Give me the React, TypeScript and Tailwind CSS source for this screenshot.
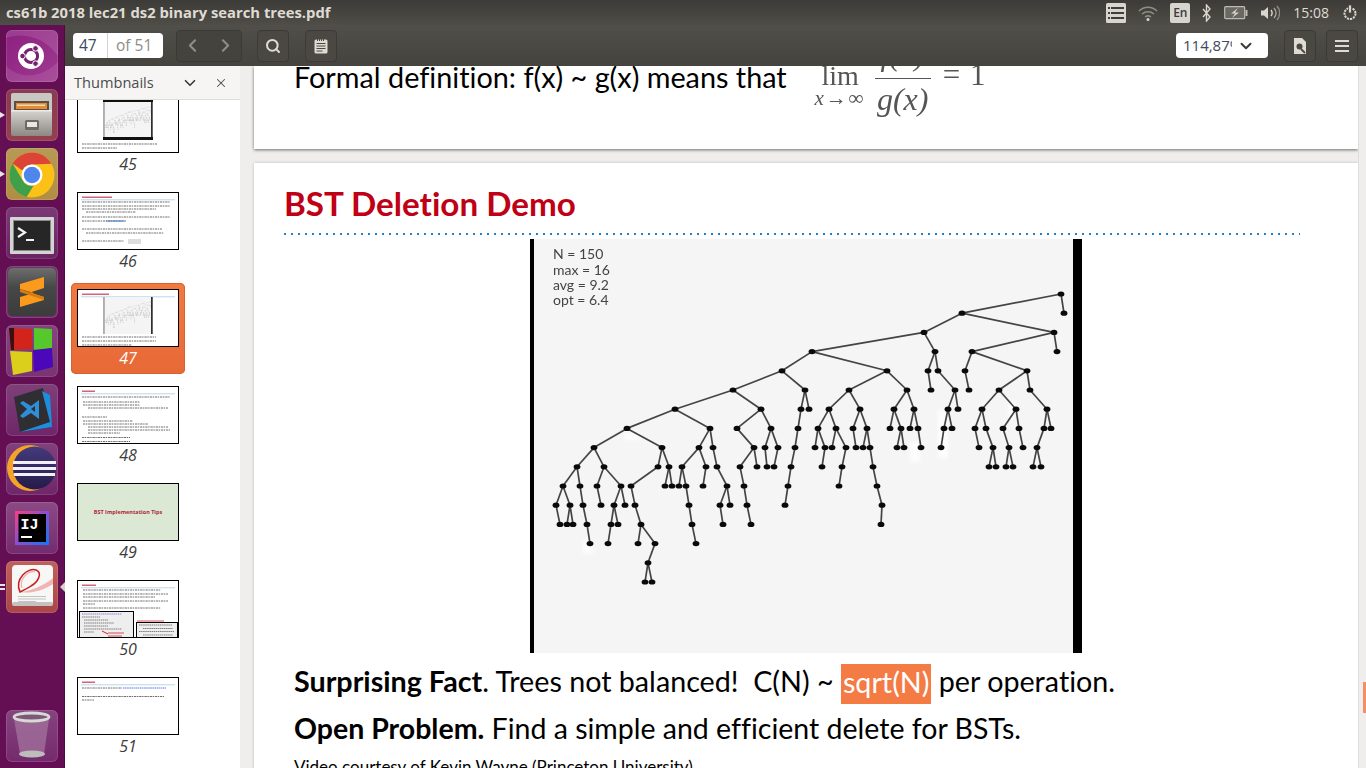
import { ChevronDown, ChevronLeft, ChevronRight, Search, X } from 'lucide-react';
import type { ReactNode } from 'react';

type TreeNode = [number, ...TreeNode[]];

// x of every node, read off the picture; y follows from the depth
const TREE: TreeNode = [1061,
  [1064],
  [962,
    [1054,
      [1057],
      [972,
        [965, [969]],
        [1027,
          [999,
            [982, [975, [979]], [986, [993, [989], [996]]]],
            [1016, [1003, [1009, [1006], [1013]]], [1019, [1023]]],
          ],
          [1030, [1047, [1044, [1037, [1033], [1041]]], [1051]]],
        ],
      ],
    ],
    [924,
      [935,
        [928, [931]],
        [938, [955, [948, [944, [941]], [952]], [958]]],
      ],
      [812,
        [782,
          [733,
            [675,
              [627,
                [594,
                  [577, [563, [556, [560]], [570, [567], [573]]], [580, [583, [587, [590]]]]],
                  [604, [597, [601]], [621, [614, [611, [608]], [618]], [625]]],
                ],
                [662,
                  [658, [631, [635, [641, [638], [655, [648, [645], [652]]]]]]],
                  [669, [665], [672]],
                ],
              ],
              [710,
                [699, [682, [679], [686, [689, [692, [696]]]]], [706, [703]]],
                [713, [717, [727, [720, [723]], [730]]]],
              ],
            ],
            [761,
              [737, [754, [740, [744, [747, [751]]]], [757]]],
              [771, [765, [767]], [778, [774]]],
            ],
          ],
          [805,
            [801, [798, [795, [791, [788, [785]]]]]],
            [809],
          ],
        ],
        [887,
          [849,
            [829,
              [818, [815], [825, [822]]],
              [836, [832], [846, [842, [839]]]],
            ],
            [860,
              [853, [856]],
              [867, [863], [870, [873, [877, [882, [881]]]]]],
            ],
          ],
          [907,
            [894, [890], [901, [897], [904]]],
            [914, [910], [918, [921]]],
          ],
        ],
      ],
    ],
  ],
];

const rowY = (depth: number) => 294 + depth * 19.2;

function TreeShape({ node, depth = 0 }: { node: TreeNode; depth?: number }) {
  const [x, ...kids] = node;
  return (
    <>
      {kids.map((kid, i) => (
        <g key={i}>
          <line x1={x} y1={rowY(depth)} x2={kid[0]} y2={rowY(depth + 1)} stroke="#444" strokeWidth="1.7" />
          <TreeShape node={kid} depth={depth + 1} />
        </g>
      ))}
      <ellipse cx={x} cy={rowY(depth)} rx="3.4" ry="2.6" fill="#0a0a0a" />
    </>
  );
}

function TreePicture() {
  return (
    <svg viewBox="530 239 552 414" className="block h-[414px] w-[552px]">
      <rect x="530" y="239" width="552" height="414" fill="#f5f5f5" />
      <g fill="#fdfdfd" className="blur-[2px]">
        <rect x="938" y="410" width="10" height="48" />
        <rect x="910" y="442" width="10" height="20" />
        <rect x="583" y="540" width="10" height="14" />
        <rect x="624" y="433" width="16" height="7" />
        <rect x="1008" y="402" width="7" height="16" />
      </g>
      <g className="blur-[0.45px]">
        <TreeShape node={TREE} />
      </g>
      <rect x="530" y="239" width="4" height="414" fill="#000" />
      <rect x="1073" y="239" width="9" height="414" fill="#000" />
      <g fontFamily="Lato, sans-serif" fontSize="14" fill="#444" className="blur-[0.3px]">
        <text x="553" y="259">N = 150</text>
        <text x="553" y="275">max = 16</text>
        <text x="553" y="290">avg = 9.2</text>
        <text x="553" y="305">opt = 6.4</text>
      </g>
    </svg>
  );
}

function Tile({ className, children }: { className: string; children: ReactNode }) {
  return (
    <div className={`relative h-[52px] w-[52px] shrink-0 overflow-hidden rounded-[6px] shadow-[inset_0_0_0_1px_rgba(255,255,255,0.12)] ${className}`}>
      {children}
    </div>
  );
}

function UbuntuIcon() {
  return (
    <svg viewBox="0 0 52 52" className="h-full w-full">
      <path d="M0 8C16 2 38 6 52 26V0H0z" fill="#fff" opacity="0.12" />
      <path d="M0 36c14 14 36 12 52-4v20H0z" fill="#fff" opacity="0.1" />
      <circle cx="25" cy="26" r="13" fill="#fff" />
      <circle cx="25" cy="26" r="6.6" fill="none" stroke="#77216f" strokeWidth="3" />
      <g fill="#77216f" stroke="#fff" strokeWidth="1">
        <circle cx="16.5" cy="26" r="2.8" />
        <circle cx="29.5" cy="18.4" r="2.8" />
        <circle cx="29.5" cy="33.6" r="2.8" />
      </g>
    </svg>
  );
}

function FilesIcon() {
  return (
    <svg viewBox="0 0 52 52" className="h-full w-full">
      <defs>
        <linearGradient id="cabinet" x1="0" y1="0" x2="0" y2="1">
          <stop offset="0" stopColor="#d6d4d0" />
          <stop offset="1" stopColor="#8c8984" />
        </linearGradient>
      </defs>
      <rect x="5" y="4" width="41" height="20" rx="2" fill="#c9c7c3" />
      <rect x="8" y="12" width="35" height="10" fill="#5b5147" />
      <rect x="10" y="14" width="31" height="6" fill="#e58b38" />
      <rect x="11" y="15.500" width="28" height="1.500" fill="#f8d9a8" />
      <rect x="5" y="21" width="41" height="26" rx="2" fill="url(#cabinet)" />
      <rect x="5" y="21" width="41" height="1.500" fill="#eceae7" />
      <rect x="19" y="31" width="14" height="10" rx="1.500" fill="#6d6a65" />
      <rect x="21" y="33" width="10" height="5" fill="#e9e7e4" />
    </svg>
  );
}

function ChromeIcon() {
  return (
    <svg viewBox="0 0 52 52" className="h-full w-full">
      <circle cx="26" cy="27" r="22.500" fill="#fbc116" />
      <path d="M6.600 15.600A22.500 22.500 0 0 1 45.500 15.800L26 16.500a10.500 10.500 0 0 0-9.600 6z" fill="#dc4437" />
      <path d="M6.600 15.600 16.700 32.500a10.500 10.500 0 0 0 10.900 5L20.700 49A22.500 22.500 0 0 1 6.600 15.600z" fill="#3f9f4b" />
      <circle cx="26" cy="27" r="10.500" fill="#fff" />
      <circle cx="26" cy="27" r="8.200" fill="#4f86ec" />
    </svg>
  );
}

function TerminalIcon() {
  return (
    <svg viewBox="0 0 52 52" className="h-full w-full">
      <rect x="4" y="10" width="44" height="37" rx="1" fill="#d4d4d2" />
      <rect x="7" y="13" width="38" height="31" fill="#8a8a88" />
      <rect x="8" y="14" width="36" height="29" fill="#262626" />
      <path d="M12 21l7 4.500-7 4.500" fill="none" stroke="#f2f2f2" strokeWidth="2.200" />
      <rect x="20" y="32" width="8" height="2" fill="#f2f2f2" />
    </svg>
  );
}

function SublimeIcon() {
  return (
    <svg viewBox="0 0 52 52" className="h-full w-full">
      <defs>
        <linearGradient id="subl" x1="0" y1="0" x2="0" y2="1">
          <stop offset="0" stopColor="#6e6e6e" />
          <stop offset="0.4" stopColor="#474747" />
          <stop offset="1" stopColor="#3c3c3c" />
        </linearGradient>
      </defs>
      <rect x="2" y="2" width="48" height="48" rx="5" fill="url(#subl)" />
      <path d="M14 18 38 11V22L24 26.500 38 31V34L14 41V31L28 27 14 23z" fill="#fb9a1d" />
      <path d="M14 23 38 31V34L14 26z" fill="#d97c0c" />
    </svg>
  );
}

function CubeIcon() {
  return (
    <svg viewBox="0 0 52 52" className="h-full w-full">
      <path d="M3 3l23 1v20L5 25z" fill="#d3241c" />
      <path d="M3 3l5 0 0 22-3 0z" fill="#3a1010" />
      <path d="M28 3l18 1v19l-18 3z" fill="#55c82c" />
      <path d="M4 26l22 1v19L7 50z" fill="#dccf1c" />
      <path d="M27 25l19-2 1 19-19 5z" fill="#4a08b8" />
    </svg>
  );
}

function VsCodeIcon() {
  return (
    <svg viewBox="0 0 52 52" className="h-full w-full">
      <path d="M8 13 37 4l9 39-32 5z" fill="#2f2f33" />
      <path d="M36 7l8 4 2 32-32 5 30-10z" fill="#1b8fdc" />
      <path d="M33 16v19l-8-6-8 5-3-2 7-7-7-6 3-2 8 5zM29 22l-4 3 4 3z" fill="#2e8fd8" fillRule="evenodd" />
    </svg>
  );
}

function EclipseIcon() {
  return (
    <svg viewBox="0 0 52 52" className="h-full w-full">
      <defs>
        <linearGradient id="ecl" x1="0" y1="0" x2="0" y2="1">
          <stop offset="0" stopColor="#453a7c" />
          <stop offset="1" stopColor="#241b4a" />
        </linearGradient>
      </defs>
      <circle cx="24" cy="25" r="23" fill="#f5a228" />
      <circle cx="28.500" cy="25" r="21.500" fill="url(#ecl)" />
      <g fill="#f2f0f6">
        <rect x="7" y="18" width="43" height="3" />
        <rect x="7" y="24" width="43" height="3" />
        <rect x="8" y="30" width="41" height="3" />
      </g>
    </svg>
  );
}

function IdeaIcon() {
  return (
    <svg viewBox="0 0 52 52" className="h-full w-full">
      <defs>
        <linearGradient id="ijg" x1="0" y1="0" x2="1" y2="1">
          <stop offset="0" stopColor="#fc3f81" />
          <stop offset="0.5" stopColor="#8a4fd0" />
          <stop offset="1" stopColor="#087cfa" />
        </linearGradient>
      </defs>
      <rect x="9" y="9" width="34" height="34" fill="url(#ijg)" />
      <rect x="12.500" y="12" width="27.500" height="28" fill="#000" />
      <text x="14.500" y="27" fontFamily="'Liberation Mono', monospace" fontWeight="700" fontSize="15" fill="#fff">IJ</text>
      <rect x="15" y="34" width="11" height="2" fill="#fff" />
    </svg>
  );
}

function EvinceIcon() {
  return (
    <svg viewBox="0 0 52 52" className="h-full w-full">
      <rect x="6" y="4" width="41" height="41" rx="4" fill="#f7f7f5" />
      <rect x="6" y="41" width="41" height="4" rx="2" fill="#c2c2bf" />
      <path d="M14 31C24 30 36 26 47 17v6C36 30 24 33 14 31z" fill="#f2b4b2" />
      <path d="M14 31C8 18 22 6 30 9c7 3 2 12-5 16-3 2-7 4-11 6z" fill="none" stroke="#c81e22" strokeWidth="1.500" />
      <path d="M16 27C13 17 23 9 29 11" fill="none" stroke="#f0b0ae" strokeWidth="1.200" />
      <g fill="#c3c3c1">
        <rect x="12" y="35" width="28" height="1" />
        <rect x="12" y="37.500" width="28" height="1" />
        <rect x="12" y="40" width="18" height="1" />
      </g>
    </svg>
  );
}

function TrashIcon() {
  return (
    <svg viewBox="0 0 52 52" className="h-full w-full">
      <path d="M8 9h35l-5 35c-3 3-21 3-24 0z" fill="#a5789f" opacity="0.7" />
      <ellipse cx="25.500" cy="7" rx="17.500" ry="4" fill="#7b5a78" stroke="#d8d8d6" strokeWidth="2.800" />
      <ellipse cx="26" cy="44" rx="13" ry="3.500" fill="#bdbdbb" />
    </svg>
  );
}

function TrayIcons() {
  return (
    <div className="flex h-full items-center">
      <svg viewBox="0 0 20 20" className="h-[20px] w-[20px]">
        <rect width="20" height="20" rx="1.500" fill="#d8d5cf" />
        <g fill="#3f3e3a">
          <rect x="2" y="4" width="2" height="2" />
          <rect x="5" y="4" width="13" height="2" />
          <rect x="2" y="9" width="2" height="2" />
          <rect x="5" y="9" width="13" height="2" />
          <rect x="2" y="14" width="2" height="2" />
          <rect x="5" y="14" width="13" height="2" />
        </g>
      </svg>
      <svg viewBox="0 0 20 16" className="ml-[12px] h-[16px] w-[20px]" fill="none" stroke="#8f8d87" strokeWidth="1.500">
        <path d="M1 6c5-5 13-5 18 0" />
        <path d="M4 9c3.500-3 8.500-3 12 0" />
        <path d="M7 12c2-1.500 4-1.500 6 0" />
        <circle cx="10" cy="14.500" r="0.800" fill="#d8d5cf" stroke="#d8d5cf" />
      </svg>
      <div className="ml-[12px] flex h-[20px] w-[20px] items-center justify-center rounded-[2px] bg-[#d8d5cf] font-['Open_Sans',sans-serif] text-[12px] font-semibold text-[#3c3b37]">
        En
      </div>
      <svg viewBox="0 0 10 18" className="ml-[12px] h-[18px] w-[10px]" fill="none" stroke="#d8d5cf" strokeWidth="1.400">
        <path d="M1 5l7 8-3.500 4V1L8 5 1 13" />
      </svg>
      <svg viewBox="0 0 24 14" className="ml-[12px] h-[14px] w-[24px]">
        <rect x="0.700" y="0.700" width="20" height="12" rx="1" fill="#6a6862" stroke="#bdbab3" strokeWidth="1.200" />
        <rect x="21.500" y="4" width="2" height="6" fill="#bdbab3" />
        <path d="M14 2 7 7.500h4L8 12l7-5.500h-4z" fill="#d8d5cf" />
      </svg>
      <svg viewBox="0 0 20 16" className="ml-[12px] h-[16px] w-[20px]" fill="none">
        <path d="M1 5.500h3L8 2v12L4 10.500H1z" fill="#d8d5cf" />
        <path d="M11 5c1.500 2 1.500 4 0 6" stroke="#d8d5cf" strokeWidth="1.400" />
        <path d="M14 3c2.500 3 2.500 7 0 10" stroke="#a9a6a0" strokeWidth="1.300" />
        <path d="M17 1c3.500 4 3.500 10 0 14" stroke="#8f8d87" strokeWidth="1.300" />
      </svg>
      <span className="ml-[13px] font-['Open_Sans',sans-serif] text-[14px] text-[#dfdbd2]">15:08</span>
      <svg viewBox="0 0 16 16" className="ml-[13px] h-[16px] w-[16px]" fill="none" stroke="#d8d5cf">
        <circle cx="8" cy="8.500" r="5.500" strokeWidth="2" strokeDasharray="2.200 0.900" />
        <rect x="6.500" y="0" width="3" height="8" fill="#d8d5cf" stroke="#46443f" strokeWidth="0.800" />
      </svg>
    </div>
  );
}

function ToolButton({ children }: { children: ReactNode }) {
  return (
    <div className="flex h-[32px] w-[32px] shrink-0 items-center justify-center rounded-[4px] border border-[#3b3a36] bg-[#4a4842] text-[#dfdbd2]">
      {children}
    </div>
  );
}

function Toolbar() {
  return (
    <div className="flex h-[41px] shrink-0 items-center bg-gradient-to-b from-[#514f49] to-[#45433d] pr-[8px] pl-[8px] font-['Open_Sans',sans-serif]">
      <div className="flex h-[25px] w-[90px] items-center rounded-[4px] bg-white text-[15.5px]">
        <span className="w-[35px] border-r border-[#d5d3cf] pl-[6px] leading-[25px] text-[#3b4a5e]">47</span>
        <span className="pl-[8px] text-[#8f8c86]">of 51</span>
      </div>
      <div className="ml-[13px] flex h-[32px] w-[66px] items-center gap-[12px] rounded-[4px] border border-[#3b3a36] bg-[#45433d] pl-[5px] text-[#8f8d87]">
        <ChevronLeft size={21} strokeWidth={2.4} />
        <ChevronRight size={21} strokeWidth={2.4} />
      </div>
      <div className="ml-[15px]">
        <ToolButton>
          <Search size={16} strokeWidth={3} />
        </ToolButton>
      </div>
      <div className="ml-[16px]">
        <ToolButton>
          <svg viewBox="0 0 14 16" className="h-[16px] w-[14px]">
            <rect x="0.500" y="1.500" width="13" height="14" rx="1.500" fill="#dfdbd2" />
            <g fill="#4a4842">
              <rect x="3" y="0" width="1" height="3" />
              <rect x="5" y="0" width="1" height="3" />
              <rect x="7" y="0" width="1" height="3" />
              <rect x="9" y="0" width="1" height="3" />
              <rect x="2.500" y="5" width="9" height="1" />
              <rect x="2.500" y="7.500" width="9" height="1" />
              <rect x="2.500" y="10" width="9" height="1" />
              <rect x="2.500" y="12.500" width="6" height="1" />
            </g>
          </svg>
        </ToolButton>
      </div>
      <div className="flex-1" />
      <div className="flex h-[25px] w-[92px] items-center rounded-[4px] bg-white pl-[7px] text-[15px] text-[#3b4a5e]">
        <span className="w-[49px] overflow-hidden whitespace-nowrap">114,87%</span>
        <ChevronDown size={18} strokeWidth={2.6} className="ml-[5px] text-[#3c3b37]" />
      </div>
      <div className="ml-[16px]">
        <ToolButton>
          <svg viewBox="0 0 14 16" className="h-[16px] w-[14px]">
            <path d="M1 0h8l4 4v12H1z" fill="#dfdbd2" />
            <circle cx="6.500" cy="8.500" r="3" fill="#4a4842" />
            <path d="M8 11l4 4" stroke="#4a4842" strokeWidth="1.800" />
          </svg>
        </ToolButton>
      </div>
      <div className="ml-[10px]">
        <ToolButton>
          <svg viewBox="0 0 14 12" className="h-[12px] w-[14px]" fill="#dfdbd2">
            <rect y="0" width="14" height="2" />
            <rect y="5" width="14" height="2" />
            <rect y="10" width="14" height="2" />
          </svg>
        </ToolButton>
      </div>
    </div>
  );
}

type Line = [number, number, number];

function MiniPage({ title, lines = [], children }: { title?: number; lines?: Line[]; children?: ReactNode }) {
  return (
    <svg viewBox="0 0 100 56" className="block h-[56px] w-[100px]">
      {title && <rect x="4" y="3.500" width={title} height="1.500" fill="#c8203a" opacity="0.7" className="blur-[0.3px]" />}
      {title && <line x1="3" y1="6.800" x2="97" y2="6.800" stroke="#9cc4e4" strokeWidth="0.700" />}
      <g className="blur-[0.35px]">
        {lines.map(([x, y, w], i) => (
          <line key={i} x1={x} y1={y} x2={x + w} y2={y} stroke="#222" strokeWidth="1" strokeDasharray="2.400 0.600 1.400 0.800" opacity="0.65" />
        ))}
      </g>
      {children}
    </svg>
  );
}

function SmallTree({ x, y }: { x: number; y: number }) {
  return (
    <svg x={x} y={y} width="50" height="37" viewBox="530 239 552 414">
      <rect x="530" y="239" width="552" height="414" fill="#f4f4f4" />
      <g opacity="0.45">
        <TreeShape node={TREE} />
      </g>
      <rect x="530" y="239" width="14" height="414" fill="#888" />
      <rect x="1064" y="239" width="18" height="414" fill="#222" />
    </svg>
  );
}

const PAGES: { page: number; body: ReactNode; tint?: string }[] = [
  {
    page: 45,
    body: (
      <MiniPage lines={[[4, 48, 75], [4, 52, 35]]}>
        <line x1="3" y1="2" x2="97" y2="2" stroke="#9cc4e4" strokeWidth="0.700" />
        <SmallTree x={25} y={6} />
        <rect x="25" y="3" width="50" height="3" fill="#111" />
        <rect x="25" y="41" width="50" height="3" fill="#111" />
      </MiniPage>
    ),
  },
  {
    page: 46,
    body: (
      <MiniPage
        title={30}
        lines={[[4, 9, 88], [4, 13, 88], [4, 16, 74], [8, 19, 50], [4, 24, 88], [4, 28, 44], [4, 36, 80], [8, 40, 78], [4, 48, 42]]}
      >
        <rect x="50" y="46" width="13" height="5" fill="#ddd" />
        <rect x="28" y="27.500" width="18" height="1" fill="#1f6fd0" opacity="0.8" />
      </MiniPage>
    ),
  },
  {
    page: 47,
    body: (
      <MiniPage title={27} lines={[[4, 47, 74], [4, 51, 74], [4, 55, 50]]}>
        <SmallTree x={25} y={7} />
      </MiniPage>
    ),
  },
  {
    page: 48,
    body: (
      <MiniPage
        title={13}
        lines={[[4, 10, 88], [5, 15, 57], [5, 18, 57], [10, 21, 80], [4, 30, 25], [5, 34, 50], [5, 37, 65], [10, 40, 80], [10, 43, 82], [10, 46, 32], [4, 50.500, 48], [4, 54.500, 48]]}
      />
    ),
  },
  {
    page: 49,
    tint: 'bg-[#dbe9d4]',
    body: (
      <div className="flex h-[56px] w-[100px] items-center justify-center whitespace-nowrap font-['Open_Sans',sans-serif] text-[5.5px] font-bold text-[#b0283a]">
        BST Implementation Tips
      </div>
    ),
  },
  {
    page: 50,
    body: (
      <MiniPage title={14} lines={[[5, 9, 78], [5, 13, 85], [5, 16, 72], [5, 20, 85], [5, 23, 12], [5, 27, 78]]}>
        <rect x="1.500" y="30.500" width="54" height="27" fill="#eee" stroke="#000" />
        <g stroke="#333" strokeWidth="1" strokeDasharray="1.500 0.600" opacity="0.6" className="blur-[0.3px]">
          <line x1="4" y1="33" x2="44" y2="33" stroke="#4a3fd0" />
          <line x1="4" y1="36" x2="22" y2="36" />
          <line x1="6" y1="39" x2="30" y2="39" />
          <line x1="6" y1="42" x2="36" y2="42" />
          <line x1="6" y1="45" x2="30" y2="45" />
          <line x1="6" y1="48" x2="44" y2="48" />
          <line x1="6" y1="51" x2="16" y2="51" />
        </g>
        <line x1="24" y1="50" x2="30" y2="53" stroke="#d0202a" strokeWidth="1" />
        <line x1="30" y1="52" x2="46" y2="52" stroke="#d0202a" strokeWidth="0.800" />
        <line x1="30" y1="55" x2="44" y2="55" stroke="#d0202a" strokeWidth="0.800" />
        <line x1="59" y1="40" x2="86" y2="40" stroke="#d0202a" strokeWidth="0.800" />
        <rect x="58.500" y="41.500" width="41" height="15" fill="#eee" stroke="#000" />
        <g stroke="#333" strokeWidth="1" strokeDasharray="1.500 0.600" opacity="0.6" className="blur-[0.3px]">
          <line x1="61" y1="44" x2="94" y2="44" />
          <line x1="65" y1="47.500" x2="95" y2="47.500" />
          <line x1="61" y1="50.500" x2="96" y2="50.500" />
          <line x1="65" y1="54" x2="95" y2="54" />
        </g>
      </MiniPage>
    ),
  },
  {
    page: 51,
    body: (
      <MiniPage title={13} lines={[[4, 10, 40], [4, 18.500, 82], [4, 22, 12]]}>
        <line x1="45" y1="10" x2="88" y2="10" stroke="#2f5fd8" strokeWidth="1" strokeDasharray="1.600 0.500" opacity="0.8" />
      </MiniPage>
    ),
  },
];

function ThumbItem({ page, body, tint }: { page: number; body: ReactNode; tint?: string }) {
  const selected = page === 47;
  return (
    <div
      className={`mb-[6px] flex h-[91px] w-[114px] flex-col items-center rounded-[5px] pt-[6px] ${
        selected ? 'bg-gradient-to-b from-[#f27a41] to-[#e76936] shadow-[inset_0_0_0_1px_#d5622f]' : ''
      }`}
    >
      <div className={`h-[58px] w-[102px] shrink-0 overflow-hidden border border-black ${tint ?? 'bg-white'}`}>{body}</div>
      <div className={`h-[22px] text-center text-[16px] leading-[22px] italic ${selected ? 'text-white' : 'text-[#3c3c3c]'}`}>{page}</div>
    </div>
  );
}

function Sidebar() {
  return (
    <div className="flex w-[175px] shrink-0 flex-col overflow-hidden bg-white font-['Open_Sans',sans-serif]">
      <div className="z-10 flex h-[34px] shrink-0 items-center border-b border-[#dfddd9] bg-[#f6f5f4] pl-[9px] text-[#4c4c4c]">
        <span className="w-[107px] text-[14.6px] whitespace-nowrap">Thumbnails</span>
        <ChevronDown size={18} strokeWidth={2.2} className="text-[#3c3b37]" />
        <X size={14} strokeWidth={1.800} className="ml-[15px] text-[#4c4c4c]" />
      </div>
      <div className="-mt-[11px] px-[6px]">
        {PAGES.map((p) => (
          <ThumbItem key={p.page} {...p} />
        ))}
      </div>
    </div>
  );
}

function Launcher() {
  return (
    <div className="relative flex w-[65px] shrink-0 flex-col gap-[7px] bg-[#640f54] pt-[5px] pb-[6px] pl-[6px] shadow-[inset_-1px_0_0_#4e0b42]">
      <Tile className="bg-gradient-to-br from-[#8c1f80] to-[#a03a90]"><UbuntuIcon /></Tile>
      <Tile className="bg-gradient-to-b from-[#8a3a56] to-[#963f4e]"><FilesIcon /></Tile>
      <Tile className="bg-gradient-to-b from-[#b79a55] to-[#b08d44]"><ChromeIcon /></Tile>
      <Tile className="bg-gradient-to-b from-[#7a3a76] to-[#6a2463]"><TerminalIcon /></Tile>
      <Tile className="bg-gradient-to-b from-[#6a3866] to-[#6f2c68]"><SublimeIcon /></Tile>
      <Tile className="bg-gradient-to-b from-[#85447f] to-[#7a3373]"><CubeIcon /></Tile>
      <Tile className="bg-gradient-to-b from-[#7e3f78] to-[#70266a]"><VsCodeIcon /></Tile>
      <Tile className="bg-gradient-to-b from-[#80407a] to-[#70266a]"><EclipseIcon /></Tile>
      <Tile className="bg-gradient-to-b from-[#8a4a84] to-[#752b6e]"><IdeaIcon /></Tile>
      <Tile className="bg-gradient-to-b from-[#c0605c] to-[#ab4547]"><EvinceIcon /></Tile>
      <Tile className="mt-auto bg-gradient-to-b from-[#85447f] to-[#75296e]"><TrashIcon /></Tile>
      <span className="absolute top-[87px] left-0 h-0 w-0 border-y-[3px] border-l-[5px] border-y-transparent border-l-[#e8e6e3]" />
      <span className="absolute top-[146px] left-0 h-0 w-0 border-y-[3px] border-l-[5px] border-y-transparent border-l-[#e8e6e3]" />
      <span className="absolute top-[559px] left-0 h-[2px] w-[5px] bg-[#e8e6e3]" />
      <span className="absolute top-[563px] left-0 h-[2px] w-[5px] bg-[#e8e6e3]" />
      <span className="absolute top-[557px] right-0 h-0 w-0 border-y-[5px] border-r-[5px] border-y-transparent border-r-[#d4d2cf]" />
    </div>
  );
}

function FirstPage() {
  return (
    <div className="relative z-10 h-[83px] shrink-0 overflow-hidden bg-white shadow-[0_1px_3px_rgba(0,0,0,0.55)]">
      <div className="-mt-[6px] flex pl-[40px]">
        <span className="font-['Lato',sans-serif] text-[28.8px] leading-[34px] whitespace-nowrap text-black [font-variant-ligatures:none]">
          Formal definition: f(x) ~ g(x) means that
        </span>
        <div className="ml-[27px] flex font-['Liberation_Serif',serif] text-[#555] blur-[0.3px]">
          <div className="flex w-[53px] flex-col items-center pt-px">
            <span className="text-[28px] leading-[30px]">lim</span>
            <span className="text-[21px] leading-[14px] tracking-[2px] whitespace-nowrap italic">x→∞</span>
          </div>
          <div className="ml-[8px] flex w-[56px] flex-col items-center">
            <span className="-mt-[22px] pb-[8px] text-[32px] leading-[32px] italic">f(x)</span>
            <div className="h-px w-full bg-[#555]" />
            <span className="text-[32px] leading-[40px] italic">g(x)</span>
          </div>
          <span className="-mt-[3px] ml-[12px] text-[31px] leading-[36px] tracking-[1px] whitespace-nowrap">= 1</span>
        </div>
      </div>
    </div>
  );
}

function SecondPage() {
  return (
    <div className="mt-[14px] flex-1 bg-white shadow-[0_0_3px_rgba(0,0,0,0.2)]">
      <h1 className="pt-[19px] pl-[30px] font-['Lato',sans-serif] text-[33.2px] leading-[42px] font-bold text-[#c00014] [font-variant-ligatures:none]">
        BST Deletion Demo
      </h1>
      <div className="mt-[9px] ml-[30px] h-[2px] w-[1016px] bg-[linear-gradient(to_right,#1f7fd0_2px,transparent_2px)] bg-[length:7px_2px]" />
      <div className="mt-[4px] ml-[276px] w-[552px]">
        <TreePicture />
      </div>
      <div className="mt-[8px] pl-[40px] font-['Lato',sans-serif] text-black [font-variant-ligatures:none]">
        <p className="flex h-[42px] items-center text-[28.7px] whitespace-pre">
          <b>Surprising Fact</b>. Trees not balanced!  C(N) ~ <span className="mt-[4px] bg-[#f47b44] px-[2px] pb-[4px] leading-[36px] text-white">sqrt(N)</span> per operation.
        </p>
        <p className="mt-[4px] flex h-[42px] items-center text-[28.5px] whitespace-pre">
          <b>Open Problem.</b> Find a simple and efficient delete for BSTs.
        </p>
        <p className="mt-[7px] text-[17px] leading-[22px] whitespace-nowrap">Video courtesy of Kevin Wayne (Princeton University)</p>
      </div>
    </div>
  );
}

export default function App() {
  return (
    <div className="flex h-[768px] w-[1366px] flex-col overflow-hidden bg-[#efeeec]">
      <div className="flex h-[25px] shrink-0 items-center justify-between bg-gradient-to-b from-[#3c3b37] to-[#4f4d47] pr-[8px] pl-[6px]">
        <span className="font-['Open_Sans',sans-serif] text-[14.8px] font-bold whitespace-nowrap text-[#dfdbd2]">
          cs61b 2018 lec21 ds2 binary search trees.pdf
        </span>
        <TrayIcons />
      </div>
      <div className="flex min-h-0 flex-1">
        <Launcher />
        <div className="flex min-w-0 flex-1 flex-col">
          <Toolbar />
          <div className="flex min-h-0 flex-1">
            <Sidebar />
            <div className="flex min-w-0 flex-1 flex-col overflow-hidden pl-[14px]">
              <FirstPage />
              <SecondPage />
            </div>
            <div className="relative w-[8px] shrink-0 border-l border-[#dfdedc] bg-[#efeeec]">
              <div className="absolute top-[616px] right-0 h-[31px] w-[3px] bg-[#f58f66]" />
            </div>
          </div>
        </div>
      </div>
    </div>
  );
}
